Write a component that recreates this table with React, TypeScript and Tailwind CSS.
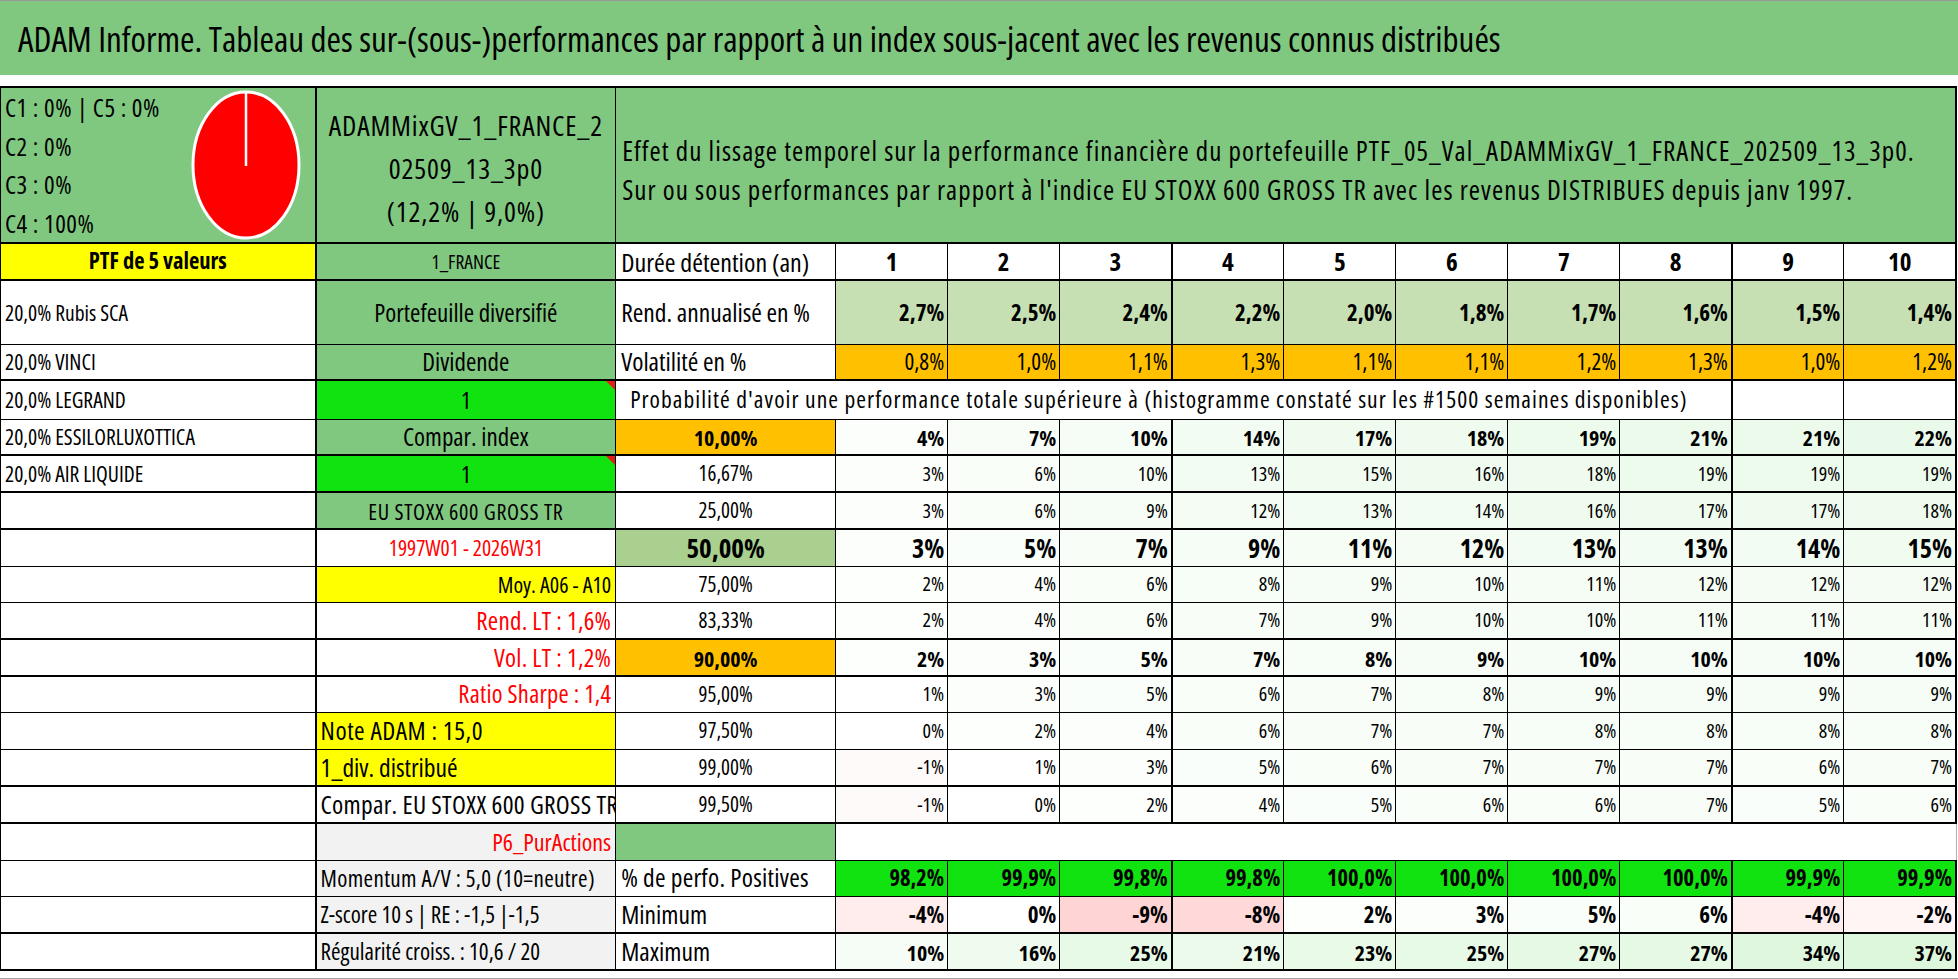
import React from 'react';

const years = ['1', '2', '3', '4', '5', '6', '7', '8', '9', '10'];
const rend = ['2,7%', '2,5%', '2,4%', '2,2%', '2,0%', '1,8%', '1,7%', '1,6%', '1,5%', '1,4%'];
const vol = ['0,8%', '1,0%', '1,1%', '1,3%', '1,1%', '1,1%', '1,2%', '1,3%', '1,0%', '1,2%'];
const positives = ['98,2%', '99,9%', '99,8%', '99,8%', '100,0%', '100,0%', '100,0%', '100,0%', '99,9%', '99,9%'];
const minimum = [-4, 0, -9, -8, 2, 3, 5, 6, -4, -2];
const maximum = [10, 16, 25, 21, 23, 25, 27, 27, 34, 37];

// colour scale used by the sheet: pink below zero, pale green above
const scaleBg = (v: number) => {
    if (v < 0) {
        const c = Math.round(255 - Math.min(-v / 10, 1) * 48);
        return `rgb(255,${c},${c})`;
    }
    const t = Math.min(v / 40, 1);
    return `rgb(${Math.round(255 - t * 38)},${Math.round(255 - t * 9)},${Math.round(255 - t * 38)})`;
};

const edge = (i: number) => (i === 2 || i === 7 || i === 9 ? 'border-r-2' : '');

const Triangle = () => (
    <span className="absolute top-0 right-0 w-0 h-0 border-l-[9px] border-l-transparent border-t-[9px] border-t-[#e41b1b]" />
);

const ValueCells = ({ vals, cls, bgs }: { vals: string[]; cls: string; bgs?: string[] }) => (
    <>
        {vals.map((v, i) => (
            <td
                key={i}
                className={`border border-black px-[3px] text-right ${cls} ${edge(i)}`}
                style={bgs ? { backgroundColor: bgs[i] } : undefined}
            >
                {v}
            </td>
        ))}
    </>
);

type ProbProps = {
    a?: string;
    b: React.ReactNode;
    bCls: string;
    q: string;
    qCls: string;
    vals: number[];
    vCls: string;
    rowCls: string;
};

const ProbRow = ({ a, b, bCls, q, qCls, vals, vCls, rowCls }: ProbProps) => (
    <tr className={rowCls}>
        <td className="border border-black border-r-2 pl-[4px] text-[21.5px]">{a}</td>
        <td className={`relative border border-black overflow-hidden ${bCls}`}>{b}</td>
        <td className={`border border-black text-center ${qCls}`}>{q}</td>
        <ValueCells vals={vals.map((v) => `${v}%`)} cls={vCls} bgs={vals.map(scaleBg)} />
    </tr>
);

const App: React.FC = () => {
    return (
        <div className="w-[1958px] h-[979px] overflow-hidden bg-white text-black border-b border-[#a0a0a0] font-['Open_Sans','Liberation_Sans',sans-serif] font-stretch-condensed leading-none whitespace-nowrap">
            {/* Title band */}
            <div className="h-[75px] bg-[#80c880] border-t border-[#9a9a9a] flex items-center pl-[18px] text-[35px]">
                ADAM Informe. Tableau des sur-(sous-)performances par rapport à un index sous-jacent avec les revenus connus distribués
            </div>
            <div className="h-[11px]" />

            <table className="table-fixed w-[1957px]">
                <colgroup>
                    <col className="w-[315px]" />
                    <col className="w-[300px]" />
                    <col className="w-[220px]" />
                    {years.map((y) => (
                        <col key={y} className="w-[112px]" />
                    ))}
                </colgroup>
                <tbody>
                    {/* Header block */}
                    <tr className="h-[154px] border-t-2 border-b-2 border-black">
                        <td className="border border-black border-r-2 bg-[#80c880] p-0">
                            <div className="flex items-center justify-between">
                                <div className="flex flex-col pl-[4px] text-[25px] tracking-[0.02em] leading-[38.5px]">
                                    <span>C1 : 0% | C5 : 0%</span>
                                    <span>C2 : 0%</span>
                                    <span>C3 : 0%</span>
                                    <span>C4 : 100%</span>
                                </div>
                                <svg width="112" height="152" viewBox="0 0 112 152" className="mr-[13px]">
                                    <ellipse cx="56" cy="76" rx="53" ry="73" fill="#ff0000" stroke="#ffffff" strokeWidth="3" />
                                    <line x1="56" y1="3" x2="56" y2="77" stroke="#ffffff" strokeWidth="2.5" />
                                </svg>
                            </div>
                        </td>
                        <td className="border border-black bg-[#80c880] pt-[6px] text-center text-[28px] tracking-[0.03em] leading-[43px]">
                            ADAMMixGV_1_FRANCE_2
                            <br />
                            02509_13_3p0
                            <br />
                            (12,2% | 9,0%)
                        </td>
                        <td colSpan={11} className="border border-black border-r-2 bg-[#80c880] pl-[6px] pt-[10px] text-[27px] tracking-[0.04em] leading-[39px]">
                            Effet du lissage temporel sur la performance financière du portefeuille PTF_05_Val_ADAMMixGV_1_FRANCE_202509_13_3p0.
                            <br />
                            Sur ou sous performances par rapport à l'indice EU STOXX 600 GROSS TR avec les revenus DISTRIBUES depuis janv 1997.
                        </td>
                    </tr>

                    <tr className="h-[37px] border-b-2 border-black">
                        <td className="border border-black border-r-2 bg-[#ffff00] text-center text-[22.5px] font-bold">PTF de 5 valeurs</td>
                        <td className="border border-black bg-[#80c880] text-center text-[19.5px]">1_FRANCE</td>
                        <td className="border border-black pl-[5px] text-[26px]">Durée détention (an)</td>
                        {years.map((y, i) => (
                            <td key={y} className={`border border-black text-center text-[25px] font-bold ${edge(i)}`}>
                                {y}
                            </td>
                        ))}
                    </tr>

                    <tr className="h-[64px]">
                        <td className="border border-black border-r-2 pl-[4px] text-[21.5px]">20,0% Rubis SCA</td>
                        <td className="border border-black bg-[#80c880] text-center text-[25px]">Portefeuille diversifié</td>
                        <td className="border border-black pl-[5px] text-[25.5px]">Rend. annualisé en %</td>
                        <ValueCells vals={rend} cls="bg-[#c6e0b4] text-[23px] font-bold" />
                    </tr>

                    <tr className="h-[36px] border-b-2 border-black">
                        <td className="border border-black border-r-2 pl-[4px] text-[21.5px]">20,0% VINCI</td>
                        <td className="border border-black bg-[#80c880] text-center text-[25px]">Dividende</td>
                        <td className="border border-black pl-[5px] text-[25.5px]">Volatilité en %</td>
                        <ValueCells vals={vol} cls="bg-[#ffc000] text-[23px]" />
                    </tr>

                    <tr className="h-[39px]">
                        <td className="border border-black border-r-2 pl-[4px] text-[21.5px]">20,0% LEGRAND</td>
                        <td className="relative border border-black bg-[#11e311] text-center text-[24px]">
                            1
                            <Triangle />
                        </td>
                        <td colSpan={9} className="border border-black border-r-2 pl-[14px] text-[23.5px] tracking-[0.045em]">
                            Probabilité d'avoir une performance totale supérieure à (histogramme constaté sur les #1500 semaines disponibles)
                        </td>
                        <td className="border border-black" />
                        <td className="border border-black border-r-2" />
                    </tr>

                    <ProbRow
                        a="20,0% ESSILORLUXOTTICA"
                        b="Compar. index"
                        bCls="bg-[#80c880] text-center text-[25px]"
                        q="10,00%"
                        qCls="bg-[#ffc000] text-[22px] font-bold"
                        vals={[4, 7, 10, 14, 17, 18, 19, 21, 21, 22]}
                        vCls="text-[22px] font-bold"
                        rowCls="h-[36px] border-b-2 border-black"
                    />
                    <ProbRow
                        a="20,0% AIR LIQUIDE"
                        b={
                            <>
                                1
                                <Triangle />
                            </>
                        }
                        bCls="bg-[#11e311] text-center text-[24px]"
                        q="16,67%"
                        qCls="text-[21px]"
                        vals={[3, 6, 10, 13, 15, 16, 18, 19, 19, 19]}
                        vCls="text-[20px]"
                        rowCls="h-[37px] border-b-2 border-black"
                    />
                    <ProbRow
                        b="EU STOXX 600 GROSS TR"
                        bCls="bg-[#80c880] text-center text-[22px] tracking-[0.03em]"
                        q="25,00%"
                        qCls="text-[21px]"
                        vals={[3, 6, 9, 12, 13, 14, 16, 17, 17, 18]}
                        vCls="text-[20px]"
                        rowCls="h-[37px] border-b-2 border-black"
                    />
                    <ProbRow
                        b="1997W01 - 2026W31"
                        bCls="text-center text-[21.5px] text-[#ff0000]"
                        q="50,00%"
                        qCls="bg-[#a9d08e] text-[27px] font-bold"
                        vals={[3, 5, 7, 9, 11, 12, 13, 13, 14, 15]}
                        vCls="text-[26px] font-bold"
                        rowCls="h-[37px]"
                    />
                    <ProbRow
                        b="Moy. A06 - A10"
                        bCls="bg-[#ffff00] text-right pr-[4px] text-[22px]"
                        q="75,00%"
                        qCls="text-[21px]"
                        vals={[2, 4, 6, 8, 9, 10, 11, 12, 12, 12]}
                        vCls="text-[20px]"
                        rowCls="h-[36px]"
                    />
                    <ProbRow
                        b="Rend. LT : 1,6%"
                        bCls="text-right pr-[4px] text-[25px] tracking-[0.01em] text-[#ff0000]"
                        q="83,33%"
                        qCls="text-[21px]"
                        vals={[2, 4, 6, 7, 9, 10, 10, 11, 11, 11]}
                        vCls="text-[20px]"
                        rowCls="h-[37px] border-b-2 border-black"
                    />
                    <ProbRow
                        b="Vol. LT : 1,2%"
                        bCls="text-right pr-[4px] text-[25px] tracking-[0.01em] text-[#ff0000]"
                        q="90,00%"
                        qCls="bg-[#ffc000] text-[22px] font-bold"
                        vals={[2, 3, 5, 7, 8, 9, 10, 10, 10, 10]}
                        vCls="text-[22px] font-bold"
                        rowCls="h-[37px] border-b-2 border-black"
                    />
                    <ProbRow
                        b="Ratio Sharpe : 1,4"
                        bCls="text-right pr-[4px] text-[24.5px] tracking-[0.01em] text-[#ff0000]"
                        q="95,00%"
                        qCls="text-[21px]"
                        vals={[1, 3, 5, 6, 7, 8, 9, 9, 9, 9]}
                        vCls="text-[20px]"
                        rowCls="h-[36px]"
                    />
                    <ProbRow
                        b="Note ADAM : 15,0"
                        bCls="bg-[#ffff00] pl-[4px] text-[25.5px] tracking-[0.02em]"
                        q="97,50%"
                        qCls="text-[21px]"
                        vals={[0, 2, 4, 6, 7, 7, 8, 8, 8, 8]}
                        vCls="text-[20px]"
                        rowCls="h-[37px]"
                    />
                    <ProbRow
                        b="1_div. distribué"
                        bCls="bg-[#ffff00] pl-[4px] text-[25.5px]"
                        q="99,00%"
                        qCls="text-[21px]"
                        vals={[-1, 1, 3, 5, 6, 7, 7, 7, 6, 7]}
                        vCls="text-[20px]"
                        rowCls="h-[37px] border-b-2 border-black"
                    />
                    <ProbRow
                        b="Compar. EU STOXX 600 GROSS TR"
                        bCls="pl-[4px] text-[25.5px] tracking-[0.01em]"
                        q="99,50%"
                        qCls="text-[21px]"
                        vals={[-1, 0, 2, 4, 5, 6, 6, 7, 5, 6]}
                        vCls="text-[20px]"
                        rowCls="h-[37px] border-b-2 border-black"
                    />

                    <tr className="h-[37px]">
                        <td className="border border-black border-r-2" />
                        <td className="border border-black bg-[#f2f2f2] text-right pr-[4px] text-[24px] text-[#ff0000]">P6_PurActions</td>
                        <td className="border border-black bg-[#80c880]" />
                        <td colSpan={10} className="border-r border-[#b0b0b0]" />
                    </tr>

                    <tr className="h-[36px]">
                        <td className="border border-black border-r-2" />
                        <td className="border border-black bg-[#f2f2f2] pl-[4px] text-[23px] tracking-[0.015em]">Momentum A/V : 5,0 (10=neutre)</td>
                        <td className="border border-black pl-[5px] text-[25.5px] tracking-[0.01em]">% de perfo. Positives</td>
                        <ValueCells vals={positives} cls="bg-[#11e311] text-[22.5px] font-bold" />
                    </tr>
                    <tr className="h-[37px] border-b-2 border-black">
                        <td className="border border-black border-r-2" />
                        <td className="border border-black bg-[#f2f2f2] pl-[4px] text-[23px]">Z-score 10 s | RE : -1,5 |-1,5</td>
                        <td className="border border-black pl-[5px] text-[25.5px]">Minimum</td>
                        <ValueCells vals={minimum.map((v) => `${v}%`)} cls="text-[23px] font-bold" bgs={minimum.map(scaleBg)} />
                    </tr>
                    <tr className="h-[37px] border-b-2 border-black">
                        <td className="border border-black border-r-2" />
                        <td className="border border-black bg-[#f2f2f2] pl-[4px] text-[23px]">Régularité croiss. : 10,6 / 20</td>
                        <td className="border border-black pl-[5px] text-[25.5px]">Maximum</td>
                        <ValueCells vals={maximum.map((v) => `${v}%`)} cls="text-[22px] font-bold" bgs={maximum.map(scaleBg)} />
                    </tr>
                </tbody>
            </table>
        </div>
    );
};

export default App;
